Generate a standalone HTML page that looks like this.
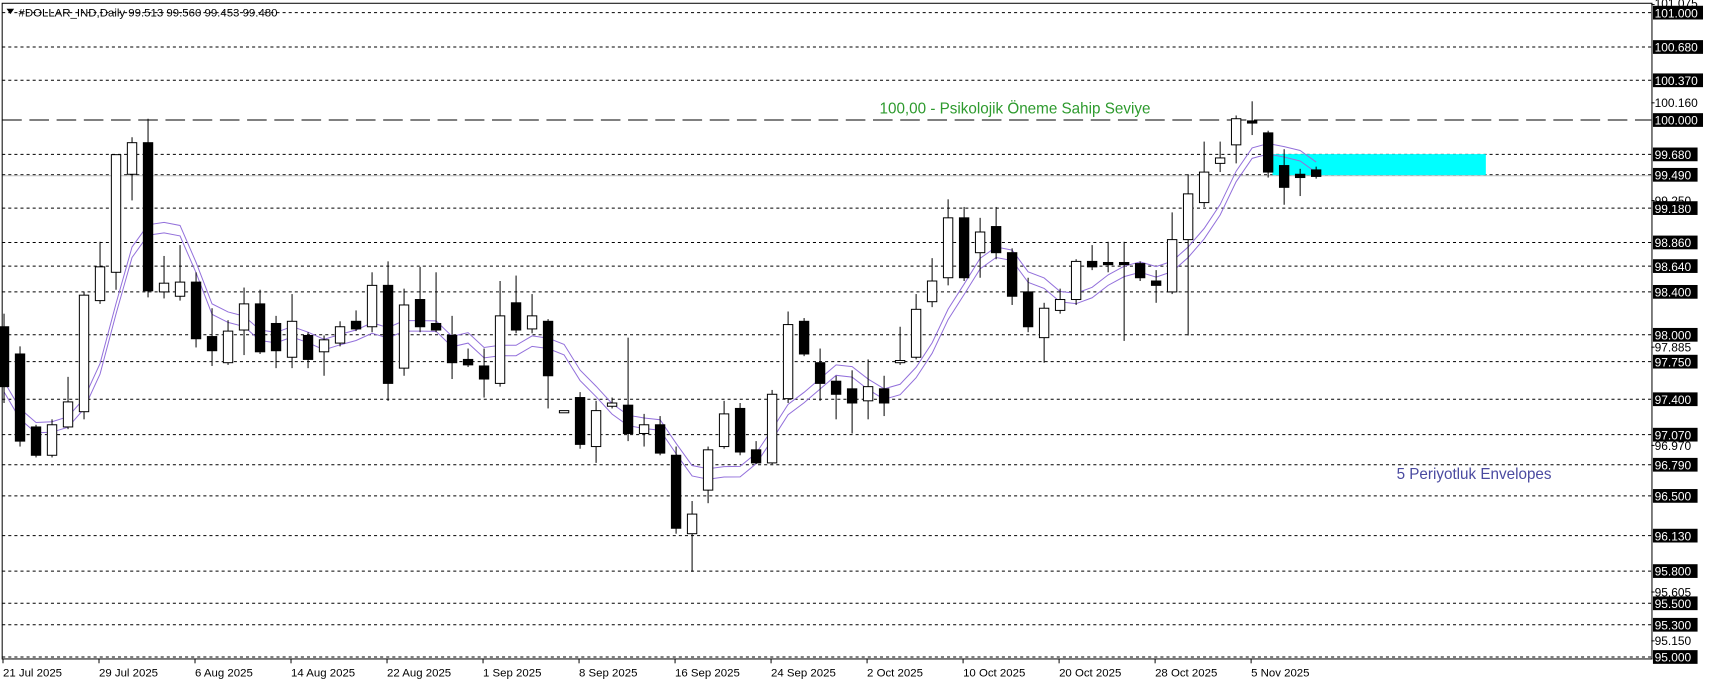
<!DOCTYPE html>
<html><head><meta charset="utf-8"><style>
html,body{margin:0;padding:0;background:#fff;width:1709px;height:684px;overflow:hidden}
svg{display:block}
text{font-family:"Liberation Sans",sans-serif}
</style></head><body>
<svg id="s" width="1709" height="684" viewBox="0 0 1570 628" preserveAspectRatio="none" xmlns="http://www.w3.org/2000/svg">
<rect x="0" y="0" width="1570" height="628" fill="#fff"/>
<g id="grid" stroke="#000" stroke-width="0.92" stroke-dasharray="2.8 2.8" fill="none"></g>
<line x1="2" x2="1517" y1="110.2" y2="110.2" stroke="#000" stroke-width="0.92" stroke-dasharray="18 7"/>
<line x1="2" x2="1517" y1="161.4" y2="161.4" stroke="#c0c0c0" stroke-width="0.92"/>
<rect x="1169" y="141.5" width="196" height="19.3" fill="#00ffff"/>
<g id="env" fill="none" stroke="#9370db" stroke-width="0.92"></g>
<g id="c"></g>
<rect x="2" y="3" width="1515.6" height="602" fill="none" stroke="#000" stroke-width="0.92"/>
<text x="808" y="104" font-size="14" fill="#2d9a2d">100,00 -  Psikolojik Öneme Sahip Seviye</text>
<text x="1283" y="440" font-size="14" fill="#4a4aa0">5 Periyotluk Envelopes</text>
<path d="M6 8 L13 8 L9.5 13 Z" fill="#000"/>
<text x="17" y="15" font-size="10.5" fill="#000">#DOLLAR_IND,Daily  99.513 99.560 99.453 99.480</text>
<g id="ax" font-size="11"></g>
<g id="dt" font-size="10.5" fill="#000"></g>
</svg>
<script>
var NS="http://www.w3.org/2000/svg";
function el(p,t,a,txt){var e=document.createElementNS(NS,t);for(var k in a)e.setAttribute(k,a[k]);if(txt)e.textContent=txt;document.getElementById(p).appendChild(e);return e;}
function Y(p){return 110.2+(100-p)*98.6;}
var boxed=[101.000,100.680,100.370,100.000,99.680,99.490,99.180,98.860,98.640,98.400,98.000,97.750,97.400,97.070,96.790,96.500,96.130,95.800,95.500,95.300,95.000];
boxed.forEach(function(p){var y=Y(p);
 if(p!==100)el("grid","line",{x1:2,x2:1517,y1:y,y2:y});
 el("ax","rect",{x:1518.5,y:y-6.3,width:p>=100?46:41,height:12.6,fill:"#000"});
 el("ax","text",{x:1520,y:y+4.3,fill:"#fff"},p.toFixed(3));});
[101.075,100.160,99.250,97.885,96.970,95.605,95.150].forEach(function(p){var y=Y(p);
 el("ax","line",{x1:1517,x2:1520,y1:y,y2:y,stroke:"#000","stroke-width":0.9});
 el("ax","text",{x:1520,y:p==101.075?7:y+4,fill:"#000"},p.toFixed(3));});
var dates=["21 Jul 2025","29 Jul 2025","6 Aug 2025","14 Aug 2025","22 Aug 2025","1 Sep 2025","8 Sep 2025","16 Sep 2025","24 Sep 2025","2 Oct 2025","10 Oct 2025","20 Oct 2025","28 Oct 2025","5 Nov 2025"];
dates.forEach(function(d,k){var x=2.75+88.2*k;
 el("dt","line",{x1:x,x2:x,y1:605,y2:609,stroke:"#000","stroke-width":0.9});
 el("dt","text",{x:x,y:621},d);});
var D=[["b",300,355,288,370],["b",325,405,318,410],["b",392,418,390,420],["w",390,418,385,420],["w",369,392,346,394],
["w",271,378,268,385],["w",245,276,222,279],["w",142,250,142,266],["w",131,160,126,184],["b",131,267,109,273],
["w",260,268,235,274],["w",259,272,225,276],["b",259,311,250,319],["b",309,322,283,336],["w",304,333,294,335],
["w",279,303,264,326],["b",279,323,266,325],["b",297,322,290,338],["w",295,328,270,338],["b",308,330,305,338],
["w",312,323,308,345],["w",300,315,295,318],["b",295,302,285,304],["w",262,300,250,305],["b",262,352,240,368],
["w",280,338,265,345],["b",275,300,245,305],["b",297,303,250,305],["b",308,333,290,348],["b",330,335,320,337],
["b",336,348,320,365],["w",290,352,258,355],["b",278,303,253,306],["w",290,302,270,306],["b",295,345,293,375],
["w",377,379,377,379],["b",365,408,360,412],["w",377,410,368,425],["w",370,373,365,375],["b",372,398,310,405],
["w",390,398,380,410],["b",390,416,382,418],["b",418,485,410,490],["w",472,490,460,525],["w",413,450,410,462],
["w",380,410,368,412],["b",375,415,370,418],["b",413,425,405,426],["w",362,425,358,426],["w",298,366,286,370],
["b",295,325,292,327],["b",333,352,320,368],["b",350,362,345,385],["b",357,370,340,398],["w",355,368,330,385],
["b",357,370,345,382],["w",331,333,300,335],["w",284,328,270,330],["w",258,277,237,282],["w",200,255,183,262],
["b",200,255,190,258],["w",213,232,200,255],["b",208,232,190,238],["b",232,272,228,280],["b",268,300,255,305],
["w",283,310,278,333],["w",275,285,265,288],["w",240,275,238,280],["b",240,245,225,248],["b",241,243,222,250],
["b",241,243,222,313],["b",242,255,240,258],["b",258,262,248,278],["w",220,268,195,270],["w",178,220,160,308],
["w",158,186,130,190],["w",145,150,130,158],["w",109,133,106,150],["b",111,113,93,124],["b",122,158,120,163],
["b",152,172,137,188],["b",160,163,155,180],["b",156,162,153,164]];
var cl=[];
D.forEach(function(d,i){var x=3.7+14.7*i;
 el("c","line",{x1:x,x2:x,y1:d[3],y2:d[4],stroke:"#000","stroke-width":0.92});
 var h=Math.max(d[2]-d[1],1.2);
 el("c","rect",{x:x-4.3,y:d[1],width:8.6,height:h,fill:d[0]=="b"?"#000":"#fff",stroke:"#000","stroke-width":0.92});
 cl.push(d[0]=="b"?d[2]:d[1]);});
var up="",lo="";
cl.forEach(function(c,i){var s=0,n=0;for(var j=Math.max(0,i-4);j<=i;j++){s+=cl[j];n++;}var m=s/n,x=3.7+14.7*i;
 up+=(i?"L":"M")+x+" "+(m-4.8);lo+=(i?"L":"M")+x+" "+(m+4.8);});
el("env","path",{d:up});el("env","path",{d:lo});
</script>
</body></html>
